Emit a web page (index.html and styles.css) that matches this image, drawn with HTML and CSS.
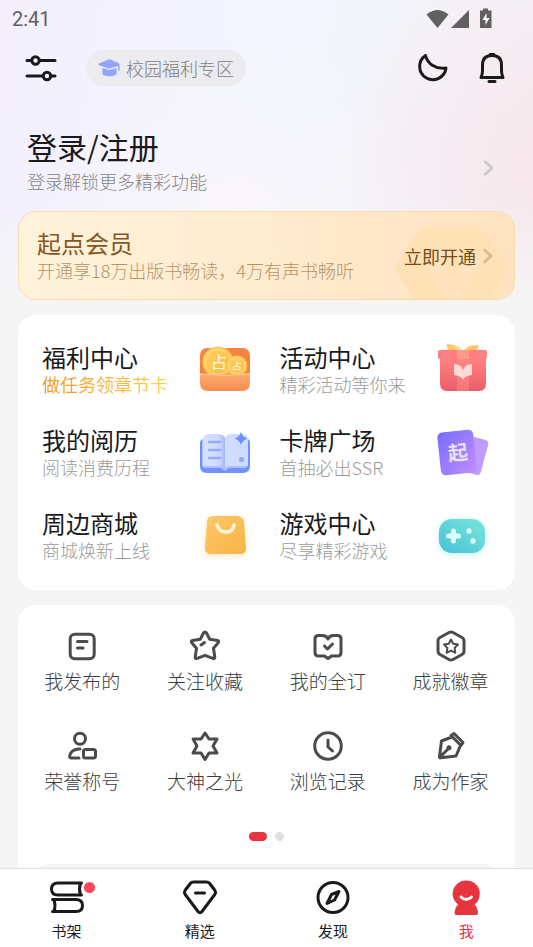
FILE: index.html
```html
<!DOCTYPE html>
<html lang="zh-CN">
<head>
<meta charset="utf-8">
<meta name="viewport" content="width=device-width, initial-scale=1">
<title>我</title>
<link rel="stylesheet" href="styles.css">
</head>
<body>
<main class="page">
  <div class="status">
    <time>2:41</time>
    <svg class="status-icons" width="68" height="22" viewBox="0 0 68 22" aria-hidden="true">
      <path d="M.5 6.500Q11.500-2.500 22.500 6.500L11.500 20z"/>
      <path d="M43 2v18H25z"/>
      <path d="M57 .5h5v2h3.500V20H54V2.500h3z"/>
      <path class="bolt" d="M60.500 5l-4 7h3v5l4-7h-3z"/>
    </svg>
  </div>

  <header class="top">
    <button class="icon-btn" aria-label="设置">
      <svg width="32" height="32" viewBox="0 0 32 32" class="line"><path d="M2 8.500h4M15 8.500h15M2 24h15M27 24h3"/><circle cx="10.500" cy="8.500" r="3.700"/><circle cx="22" cy="24" r="3.700"/></svg>
    </button>
    <a class="campus" href="#">
      <svg width="22" height="18" viewBox="0 0 22 18" aria-hidden="true"><path fill="#91a6fb" d="M1 4.500L10.500.5Q11.500.2 12.500.5L20.500 4Q21.500 4.600 21.500 6v5.500h-1.500V7l-7.500 2.300q-1.200.3-2.400 0L1 6.200Q0 5.300 1 4.500z"/><path fill="#91a6fb" d="M4.500 9l6 1.800q1 .3 2 0l6-1.900v5.600q0 1-1 1.500-6 2.500-12 0-1-.5-1-1.500z"/></svg>
      <span>校园福利专区</span>
    </a>
    <button class="icon-btn moon" aria-label="夜间模式">
      <svg width="32" height="32" viewBox="0 0 32 32" class="line"><path d="M9.500 3.500A13.200 13.200 0 1 0 30 16C20 17.500 11.500 12 9.500 3.500z"/></svg>
    </button>
    <button class="icon-btn" aria-label="消息">
      <svg width="32" height="32" viewBox="0 0 32 32" class="line"><path d="M5 25.500Q6.500 22 6.500 19V13Q6.500 3.500 16 3.500T25.500 13v6Q25.500 22 27 25.500zM14 2.500h4M13 29.500h6"/></svg>
    </button>
  </header>

  <a class="profile" href="#">
    <div>
      <h1>登录/注册</h1>
      <p>登录解锁更多精彩功能</p>
    </div>
    <svg class="chevron" width="12" height="16" viewBox="0 0 12 16"><path d="M2.500 2L9 8l-6.500 6"/></svg>
  </a>

  <a class="vip" href="#">
    <svg class="vip-mark" width="114" height="72" viewBox="0 0 114 72" aria-hidden="true"><path fill="#ffe1b6" d="M32 0h48q6 0 9 4l22 32q3 5 0 9L95 72H19L2 45q-3-5 0-9L23 4q3-4 9-4z"/><path fill="#ffe4bf" d="M28 33h17l11 19 15-19h18L65 68q-8 7-16 0z"/></svg>
    <div class="vip-text">
      <h2>起点会员</h2>
      <p>开通享18万出版书畅读，4万有声书畅听</p>
    </div>
    <span class="vip-go">立即开通</span>
    <svg class="chevron" width="12" height="16" viewBox="0 0 12 16"><path d="M2.500 2L9 8l-6.500 6"/></svg>
  </a>

  <section class="card features">
    <a class="feature" href="#">
      <div><h3>福利中心</h3><p class="hot">做任务领章节卡</p></div>
      <svg width="56" height="56" viewBox="0 0 56 56" aria-hidden="true">
        <defs>
          <linearGradient id="coin" x2="1" y2="1"><stop stop-color="#ffd465"/><stop offset="1" stop-color="#fbb642"/></linearGradient>
          <linearGradient id="box" x2="0" y2="1"><stop stop-color="#ffad71"/><stop offset="1" stop-color="#f68d52"/></linearGradient>
          <clipPath id="coinclip"><path d="M3 0h50v33H3z"/></clipPath>
        </defs>
        <rect x="2" y="6" width="50" height="38" rx="7" fill="#f48440"/>
        <g clip-path="url(#coinclip)"><circle cx="20" cy="20" r="15.500" fill="url(#coin)"/><circle cx="20" cy="20" r="12.500" fill="none" stroke="#ffe087"/><circle cx="39" cy="24" r="10.500" fill="url(#coin)"/><circle cx="39" cy="24" r="8" fill="none" stroke="#ffe087"/></g>
        <text x="21" y="26" class="coin-text" font-size="16">占</text><text x="39" y="28" class="coin-text" font-size="10">占</text>
        <path fill="url(#box)" d="M2 31q25 3 50 0v10q0 8-8 8H10q-8 0-8-8z"/>
        <path d="M2 32q25 3 50 0" fill="none" stroke="#ffc995"/>
      </svg>
    </a>
    <a class="feature" href="#">
      <div><h3>活动中心</h3><p>精彩活动等你来</p></div>
      <svg width="56" height="56" viewBox="0 0 56 56" aria-hidden="true">
        <defs><linearGradient id="gift" x2="0" y2="1"><stop stop-color="#ff8581"/><stop offset="1" stop-color="#ed5b6c"/></linearGradient></defs>
        <path fill="#ffc765" d="M28 10Q26 3 13 2q-2 0-1 3l2 5zM28 10Q31 3 42 3q2 0 1 3l-2 4z"/><path fill="#ffdc91" d="M19 3q7 2 9 7-7 0-9-7z"/>
        <path fill="url(#gift)" d="M5 15h46v26q0 8-7 8H12q-7 0-7-8z"/>
        <path fill="#fa8b80" opacity=".6" d="M22 15h12v34H22z"/>
        <rect x="3" y="8" width="49" height="9" rx="2" fill="#ff8080"/><path fill="#ff9b88" d="M22 8h12v9H22z"/>
        <path fill="#ffd8d8" d="M28 38q-1-4-9-5V22q7 0 9 6 2-6 9-6v11q-8 1-9 5z"/>
      </svg>
    </a>
    <a class="feature" href="#">
      <div><h3>我的阅历</h3><p>阅读消费历程</p></div>
      <svg width="56" height="56" viewBox="0 0 56 56" aria-hidden="true">
        <defs><linearGradient id="pg" x2="1"><stop stop-color="#d8e2ff"/><stop offset=".75" stop-color="#ccd8ff"/><stop offset="1" stop-color="#9fb4ff"/></linearGradient></defs>
        <path fill="#7092ff" d="M5 14h44q3 0 3 5v22q0 7-7 7H9q-7 0-7-7V19q0-5 3-5z"/>
        <path fill="#afc1ff" d="M4 14v26q0 3 4 3h15l4 3 4-3h15q4 0 4-3V14z"/>
        <path fill="url(#pg)" d="M5 15q0-6 6-6h8q8 0 8 5v29q-1-2-6-2H5z"/>
        <path fill="#d0dcff" d="M27 14q0-5 8-5h8q7 0 7 6v26H33q-5 0-6 2z"/>
        <path fill="none" stroke="#93abff" stroke-width="2.500" stroke-linecap="round" d="M11 17h11M11 25h11M11 33h11"/>
        <rect x="41" y="32" width="5" height="5" rx="2" fill="#93abff"/><path fill="#6e8efe" d="M43 7q1.500 5 6.500 6.500-5 1.500-6.500 6.500-1.500-5-6.500-6.500 5-1.500 6.500-6.500z"/>
      </svg>
    </a>
    <a class="feature" href="#">
      <div><h3>卡牌广场</h3><p>首抽必出SSR</p></div>
      <svg width="56" height="56" viewBox="0 0 56 56" aria-hidden="true">
        <defs><linearGradient id="tile" x2="1" y2="1"><stop stop-color="#766cff"/><stop offset="1" stop-color="#c28dff"/></linearGradient></defs>
        <rect x="24" y="12" width="26" height="36" rx="4" fill="#bf9cff" transform="rotate(15 37 30)"/>
        <rect x="4" y="6" width="36" height="43" rx="5" fill="url(#tile)" transform="rotate(-6 22 27)"/>
        <text x="23" y="35" class="tile-text" transform="rotate(-6 23 29)">起</text>
      </svg>
    </a>
    <a class="feature" href="#">
      <div><h3>周边商城</h3><p>商城焕新上线</p></div>
      <svg width="56" height="56" viewBox="0 0 56 56" aria-hidden="true">
        <defs><linearGradient id="bag" x2="1" y2="1"><stop stop-color="#ffc866"/><stop offset="1" stop-color="#f8b347"/></linearGradient></defs>
        <path class="glow-gold" fill="url(#bag)" d="M15 8h24q6 0 7 6l2 26q0 6-6 6H13q-6 0-6-6l2-26q0-6 6-6z"/>
        <path fill="none" stroke="#fff5dc" stroke-width="3.500" stroke-linecap="round" d="M19 17q2 7 9 7t8-7"/>
      </svg>
    </a>
    <a class="feature" href="#">
      <div><h3>游戏中心</h3><p>尽享精彩游戏</p></div>
      <svg width="56" height="56" viewBox="0 0 56 56" aria-hidden="true">
        <defs><linearGradient id="pad" x1="1" x2="0" y2="1"><stop stop-color="#7be7d7"/><stop offset="1" stop-color="#48bfda"/></linearGradient></defs>
        <rect class="glow-teal" x="4" y="11" width="46" height="34" rx="13" fill="url(#pad)"/>
        <path stroke="#dcffff" stroke-width="5" stroke-linecap="round" d="M18.500 23v10M13.500 28h10"/><g fill="#dcffff"><circle cx="34" cy="23" r="2.700"/><circle cx="38" cy="33" r="2.700"/></g>
      </svg>
    </a>
  </section>

  <section class="card tools-card">
    <div class="tools">
      <a class="tool" href="#"><svg width="32" height="32" viewBox="0 0 32 32"><rect x="4.200" y="4.200" width="24" height="24.500" rx="4.500"/><path d="M11.500 11.500h9.500M11.500 18h5.500"/></svg><span>我发布的</span></a>
      <a class="tool" href="#"><svg width="32" height="32" viewBox="0 0 32 32"><path d="M14.500 3q1.500-2 3 0l3.200 6.300 7.800 1.200q2 .8.700 2.300l-4.700 5.400 1.300 9q0 2-2 1.200L16 25.300l-7.800 3.100q-2 .8-2-1.200l1.300-9-4.700-5.400q-1.300-1.500.7-2.300l7.800-1.200zM12 15l3.500-2.500"/></svg><span>关注收藏</span></a>
      <a class="tool" href="#"><svg width="32" height="32" viewBox="0 0 32 32"><path d="M16 9Q14.500 5.500 10.500 5.500H6.500Q3 5.500 3 9v13.500Q3 26 6.500 26h6L16 28.500l3.500-2.500h6Q29 26 29 22.500V9q0-3.500-3.500-3.500h-4Q17.500 5.500 16 9zM12.500 16l3 3 5-5"/></svg><span>我的全订</span></a>
      <a class="tool" href="#"><svg width="32" height="32" viewBox="0 0 32 32"><path d="M14 2.500q2-1 4 0l9 5q2 1 2 3.500v10q0 2.500-2 3.500l-9 5q-2 1-4 0l-9-5q-2-1-2-3.500V11q0-2.500 2-3.500z"/><path class="thin" d="M16 9.500l2.200 4.200 4.800.8-3.400 3.400.7 4.900-4.300-2.200-4.300 2.200.7-4.900L9 14.500l4.800-.8z"/></svg><span>成就徽章</span></a>
      <a class="tool" href="#"><svg width="32" height="32" viewBox="0 0 32 32"><circle cx="14" cy="8.700" r="5.500"/><path d="M14 19Q7 19 4.500 23.500 2.500 28 5 28h8"/><rect x="17.500" y="19.500" width="12" height="8.500" rx="2"/></svg><span>荣誉称号</span></a>
      <a class="tool" href="#"><svg width="32" height="32" viewBox="0 0 32 32"><path d="M16 3l4 6h8l-4 7 4 7h-8l-4 6.500-4-6.500H4l4-7-4-7h8z"/></svg><span>大神之光</span></a>
      <a class="tool" href="#"><svg width="32" height="32" viewBox="0 0 32 32"><circle cx="16" cy="16" r="13.300"/><path d="M16 10v7l4.500 4"/></svg><span>浏览记录</span></a>
      <a class="tool" href="#"><svg width="32" height="32" viewBox="0 0 32 32"><path d="M19 3.500l9 9-2 3-10-10zM17 7L6.500 11 4.500 26.500q-.2 1.500 1.300 1.200L21 26l4.500-10.500M4.800 27.300l9-9"/><circle cx="14" cy="17.800" r="1"/></svg><span>成为作家</span></a>
    </div>
    <div class="dots"><i class="on"></i><i></i></div>
    <div class="banner"></div>
  </section>
</main>

<nav class="tabs">
  <a class="tab" href="#"><svg width="46" height="36" viewBox="0 0 46 36"><path d="M37.500 3H14Q7.500 3 7.500 9t6.500 6h23.500M36.500 3q-2 6 0 12M8.500 19.500H32Q38.500 19.500 38.500 25.500T32 31.500H8.500M10 19.500q2 6 0 12"/></svg><b class="badge"></b><span>书架</span></a>
  <a class="tab" href="#"><svg width="46" height="36" viewBox="0 0 46 36"><path d="M16.500 2h13q2 0 3.200 1.500L38 10.500q1.200 2-.2 4L25 31.500q-2 2.500-4 0L8.200 14.500q-1.400-2-.2-4l5.300-7Q14.500 2 16.500 2zM18.500 13h9"/></svg><span>精选</span></a>
  <a class="tab" href="#"><svg width="46" height="36" viewBox="0 0 46 36"><circle cx="23" cy="17.500" r="15"/><path d="M29 11.500l-7.500 3-4.500 9 7.500-3.500z"/></svg><span>发现</span></a>
  <a class="tab current" href="#" aria-current="page"><svg width="46" height="36" viewBox="0 0 46 36"><path class="solid" d="M23 .5A13.300 13.300 0 0 1 31.500 24.500Q34.800 28 35 33q0 2-2 2H13.500q-2 0-2-2Q12 27.500 15 24.500A13.300 13.300 0 0 1 23 .5z"/><path class="smile" d="M18 17q5 5 10.500 0"/></svg><span>我</span></a>
</nav>
</body>
</html>
```

FILE: styles.css
```css
* { box-sizing: border-box; }

body {
  margin: 0;
  height: 100vh;
  display: flex;
  flex-direction: column;
  font-family: "Noto Sans CJK SC", sans-serif;
  font-weight: 300;
  color: #1a1a1a;
  background: #f5f5f5;
}

a { color: inherit; text-decoration: none; }
h1, h2, h3, p { margin: 0; font-weight: 400; }
svg { display: block; flex: none; }

.page {
  flex: 1;
  min-height: 0;
  overflow: hidden auto;
  scrollbar-width: none;
  padding: 0 18px;
  background-color: #f5f5f5;
  background-image:
    linear-gradient(rgba(245, 245, 245, 0) 200px, #f5f5f5 310px),
    radial-gradient(circle at 105% 170px, #f7e6eb, rgba(247, 232, 238, 0) 220px),
    radial-gradient(circle at 45% 230px, #faf6fb, rgba(250, 246, 251, 0) 200px),
    linear-gradient(100deg, #f4effd, #f2f6ff 52%, #f4f2f7 78%, #f3eff4);
  background-size: 100% 320px;
  background-repeat: no-repeat;
}

.status {
  display: flex;
  align-items: center;
  justify-content: space-between;
  height: 38px;
  margin: 0 -6px;
  padding-right: 27px;
  font: 400 20px/38px Roboto, sans-serif;
  color: #606060;
}
.status-icons { fill: #606060; }
.status-icons .bolt { fill: #fff; }

.top {
  display: flex;
  align-items: center;
  height: 60px;
  padding: 0 7px;
}
.icon-btn {
  padding: 0;
  border: 0;
  background: none;
}
.line {
  fill: none;
  stroke: #1a1a1a;
  stroke-width: 3px;
  stroke-linecap: round;
  stroke-linejoin: round;
}
.campus {
  display: flex;
  align-items: center;
  gap: 6px;
  height: 36px;
  margin-left: 29px;
  padding: 0 12px;
  border-radius: 18px;
  background: #ebebf0;
  font-size: 18px;
  line-height: 24px;
  color: #808080;
}
.moon { margin: 0 28px 0 auto; }

.profile {
  display: flex;
  align-items: flex-end;
  justify-content: space-between;
  margin-top: 26px;
  padding: 0 20px 0 9px;
}
.profile h1 { font-size: 30px; line-height: 44px; }
.profile p { font-size: 18px; line-height: 26px; font-weight: 300; color: #858585; }
.chevron {
  fill: none;
  stroke: #c9c9c9;
  stroke-width: 3px;
  stroke-linecap: round;
  stroke-linejoin: round;
}
.profile .chevron { margin-bottom: 18px; }

.vip {
  position: relative;
  display: flex;
  align-items: center;
  gap: 6px;
  margin-top: 17px;
  padding: 16px 20px 16px 18px;
  border: 1px solid #fbdcae;
  border-radius: 18px;
  overflow: hidden;
  background: linear-gradient(90deg, #fff3dc, #ffe3c0);
}
.vip-mark { position: absolute; right: 5px; bottom: 0; }
.vip-text { flex: 1; }
.vip h2 { font-size: 24px; line-height: 29px; color: #85571f; }
.vip p { font-size: 18px; line-height: 26px; font-weight: 300; color: #b5946a; }
.vip-go { position: relative; font-size: 18px; line-height: 24px; font-weight: 400; color: #754b19; }
.vip .chevron { position: relative; stroke: #d6bd98; }

.card {
  margin-top: 15px;
  border-radius: 18px;
  background: #fff;
}
.features {
  display: grid;
  grid-template-columns: 1fr 1fr;
  column-gap: 26px;
  row-gap: 27px;
  padding: 27px 24px 26px;
}
.feature {
  display: flex;
  align-items: flex-start;
  justify-content: space-between;
}
.feature h3 { font-size: 24px; line-height: 30px; }
.feature p { font-size: 18px; line-height: 24px; font-weight: 300; color: #9b9b9b; }
.feature .hot {
  font-weight: 400;
  color: transparent;
  background: linear-gradient(90deg, #f9921f, #fdd25c);
  background-clip: text;
}
.coin-text { fill: #fffbe8; font-weight: 400; text-anchor: middle; }
.tile-text { fill: #e9e3ff; font-size: 20px; font-weight: 700; text-anchor: middle; }
.glow-gold { filter: drop-shadow(0 2px 3px #fbdca099); }
.glow-teal { filter: drop-shadow(0 1px 3px #8ce8e799); }

.tools-card { padding: 25px 3px 0; }
.tools {
  display: grid;
  grid-template-columns: repeat(4, 1fr);
  row-gap: 34px;
}
.tool {
  display: flex;
  flex-direction: column;
  align-items: center;
  gap: 4px;
  font-size: 19px;
  line-height: 30px;
  color: #3c3c3c;
}
.tool svg {
  fill: none;
  stroke: #4b4b4b;
  stroke-width: 3px;
  stroke-linecap: round;
  stroke-linejoin: round;
}
.tool .thin { stroke-width: 2px; }

.dots {
  display: flex;
  justify-content: center;
  gap: 8px;
  margin-top: 36px;
}
.dots i { width: 9px; height: 9px; border-radius: 5px; background: #dedfe1; }
.dots .on { width: 18px; background: #e7343f; }
.banner {
  height: 80px;
  margin: 23px 15px 0;
  border-radius: 12px;
  background: #f5f5f5;
}

.tabs {
  flex: none;
  display: grid;
  grid-template-columns: repeat(4, 1fr);
  padding: 11px 0 6px;
  border-top: 1px solid #e2e2e2;
  background: #fff;
}
.tab {
  position: relative;
  display: flex;
  flex-direction: column;
  align-items: center;
  gap: 4px;
  font-size: 15px;
  line-height: 21px;
  font-weight: 400;
}
.tab svg {
  fill: none;
  stroke: #1a1a1a;
  stroke-width: 3px;
  stroke-linecap: round;
  stroke-linejoin: round;
}
.tab .solid { fill: #e7343f; stroke: none; }
.tab .smile { stroke: #fff; }
.current { color: #e7343f; }
.badge {
  position: absolute;
  top: 2px;
  left: calc(50% + 17px);
  width: 11px;
  height: 11px;
  border-radius: 50%;
  background: #ff455b;
}
```
